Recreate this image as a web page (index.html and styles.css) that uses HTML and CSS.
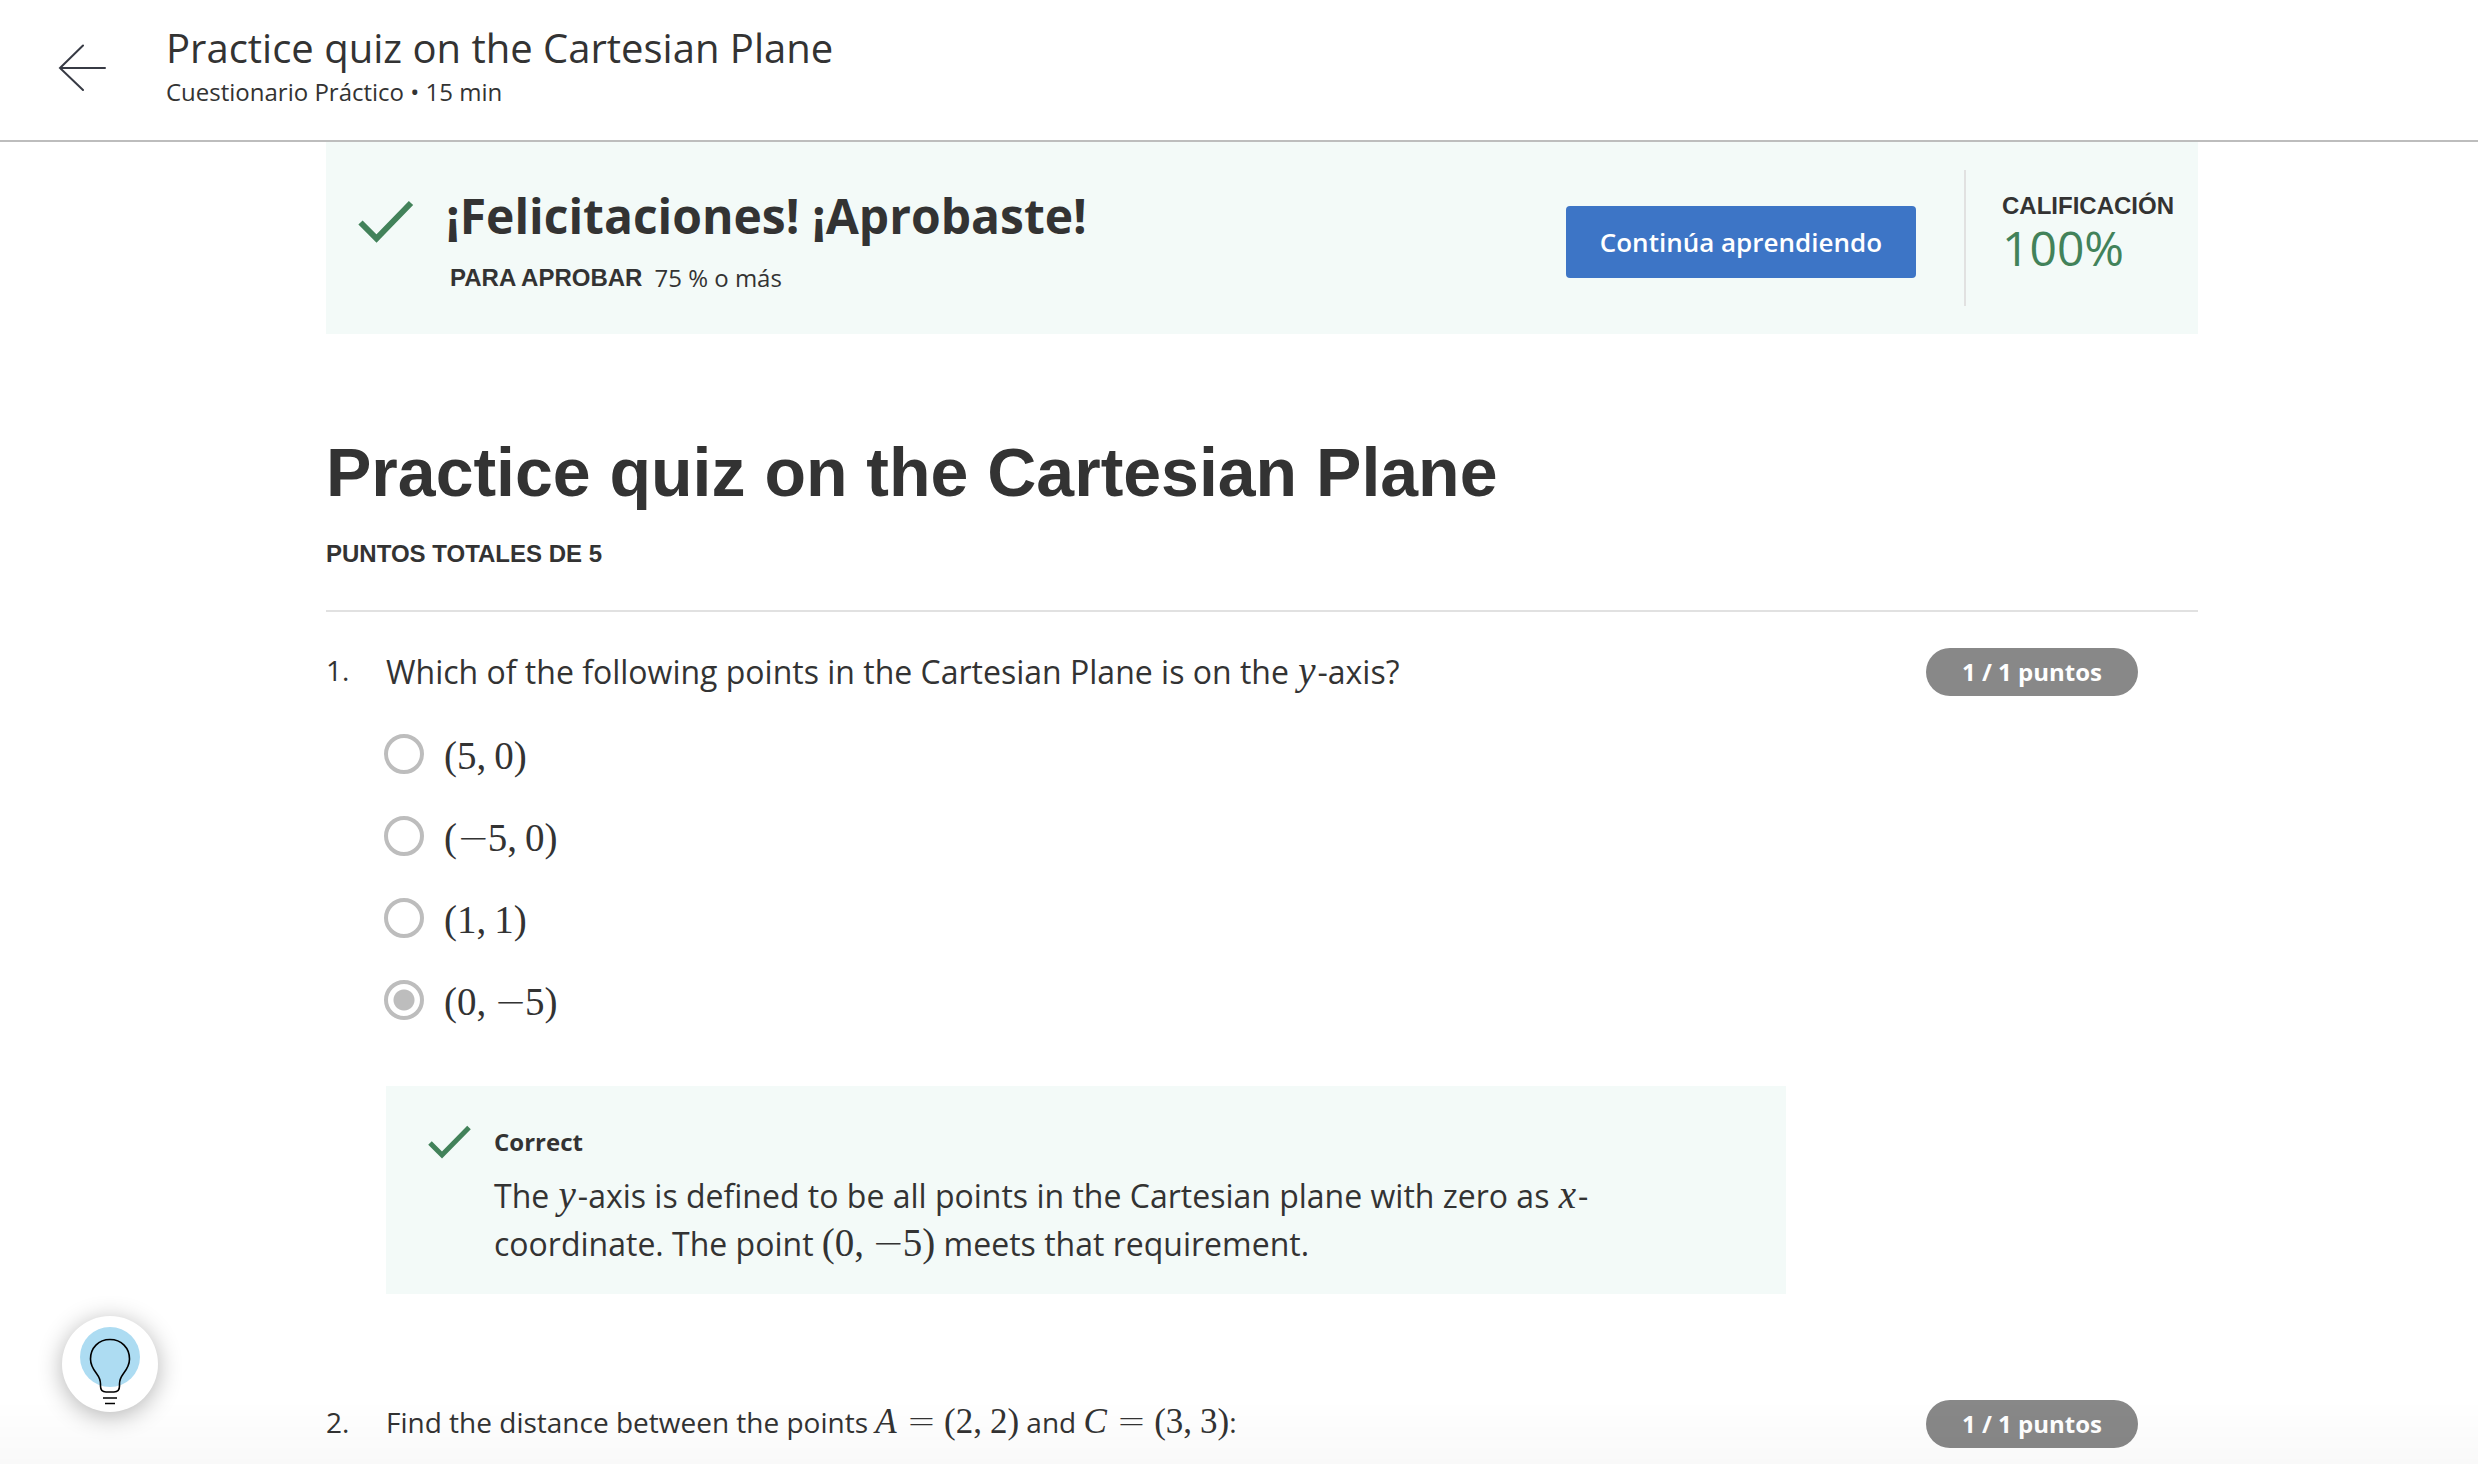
FILE: index.html
```html
<!DOCTYPE html>
<html lang="es">
<head>
<meta charset="utf-8">
<meta name="viewport" content="width=device-width, initial-scale=1">
<title>Practice quiz on the Cartesian Plane</title>
<link rel="stylesheet" href="styles.css">
</head>
<body>
<header class="topbar">
  <a class="back" href="#" aria-label="Volver">
    <svg width="48" height="50" viewBox="0 0 48 50" fill="none" stroke="#373a44" stroke-width="2" stroke-linecap="round"><path d="M2 27H47M25 4.500L2 27L25 49"/></svg>
  </a>
  <div class="topbar-text">
    <div class="topbar-title">Practice quiz on the Cartesian Plane</div>
    <div class="topbar-sub">Cuestionario Práctico • 15 min</div>
  </div>
</header>

<main class="content">
  <section class="banner">
    <svg class="banner-check" width="56" height="48" viewBox="0 0 56 48" fill="none" stroke="#42825a" stroke-width="6"><path d="M2.500 24.500L18.500 40.500L53 5"/></svg>
    <div class="banner-text">
      <h2 class="banner-title">¡Felicitaciones! ¡Aprobaste!</h2>
      <p class="banner-pass"><strong class="caps">PARA APROBAR</strong><span>75 % o más</span></p>
    </div>
    <button class="continue" type="button">Continúa aprendiendo</button>
    <div class="grade">
      <div class="caps">CALIFICACIÓN</div>
      <div class="grade-value">100%</div>
    </div>
  </section>

  <h1 class="title">Practice quiz on the Cartesian Plane</h1>
  <p class="points caps">PUNTOS TOTALES DE 5</p>

  <section class="question">
    <div class="number">1.</div>
    <div class="body">
      <p class="prompt" id="q1">Which of the following points in the Cartesian Plane is on the <i class="math var">y</i>-axis?</p>
      <div class="options" role="radiogroup" aria-labelledby="q1">
        <label class="option"><input type="radio" name="q1"><span class="math">(5<span class="comma">,</span>0)</span></label>
        <label class="option"><input type="radio" name="q1"><span class="math">(<span class="sign">−</span>5<span class="comma">,</span>0)</span></label>
        <label class="option"><input type="radio" name="q1"><span class="math">(1<span class="comma">,</span>1)</span></label>
        <label class="option"><input type="radio" name="q1" checked><span class="math">(0<span class="comma">,</span><span class="sign">−</span>5)</span></label>
      </div>
      <div class="feedback">
        <svg class="feedback-check" width="44" height="36" viewBox="0 0 44 36" fill="none" stroke="#42825a" stroke-width="5"><path d="M2 19L14 31L41 3.500"/></svg>
        <div>
          <h3 class="feedback-title">Correct</h3>
          <p class="feedback-text">The <i class="math var">y</i>-axis is defined to be all points in the Cartesian plane with zero as <i class="math var">x</i>-<br>coordinate. The point <span class="math">(0<span class="comma">,</span><span class="sign">−</span>5)</span> meets that requirement.</p>
        </div>
      </div>
    </div>
    <div class="badge">1 / 1 puntos</div>
  </section>

  <section class="question">
    <div class="number">2.</div>
    <div class="body">
      <p class="prompt prompt-small">Find the distance between the points <span class="math math-small"><i class="cap">A</i><span class="equals">=</span>(2<span class="comma">,</span>2)</span> and <span class="math math-small"><i class="cap">C</i><span class="equals">=</span>(3<span class="comma">,</span>3)</span>:</p>
    </div>
    <div class="badge">1 / 1 puntos</div>
  </section>
</main>

<button class="hint" type="button" aria-label="Ayuda">
  <svg width="96" height="96" viewBox="0 0 96 96" fill="none" stroke="#000" stroke-width="1.600">
    <circle cx="48" cy="41" r="30" fill="#addcf2" stroke="none"/>
    <path d="M48 23.500C36.500 23.500 28.500 32 28.500 43C28.500 49 31 53 34.500 57.500C37.500 61.500 38.500 64 38.500 68V70C38.500 74 40.500 76 44 76H52C55.500 76 57.500 74 57.500 70V68C57.500 64 58.500 61.500 61.500 57.500C65 53 67.500 49 67.500 43C67.500 32 59.500 23.500 48 23.500Z"/>
    <path d="M41 82H55M43 87.500H53"/>
  </svg>
</button>
</body>
</html>
```
FILE: styles.css
```css
* { box-sizing: border-box; }

body {
  margin: 0;
  min-height: 100vh;
  overflow-x: hidden;
  background: #fff;
  color: #333;
  font-family: "Open Sans", sans-serif;
  font-size: 24px;
  line-height: 36px;
}

body::after {
  content: "";
  position: fixed;
  left: 0;
  right: 0;
  bottom: 0;
  height: 64px;
  background: linear-gradient(rgba(0, 0, 0, 0), rgba(0, 0, 0, 0.024));
  pointer-events: none;
}

h1, h2, h3, p { margin: 0; }

.topbar {
  display: flex;
  align-items: center;
  gap: 60px;
  height: 142px;
  padding: 0 58px 8px;
  border-bottom: 2px solid #bdbdbd;
}
.back { display: flex; }
.topbar-title { font-size: 40px; line-height: 52px; }

.content { margin: 0 280px 0 326px; }

.banner {
  display: flex;
  height: 192px;
  padding: 28px 24px 28px 32px;
  background: #f3faf8;
}
.banner-check { margin-top: 28px; }
.banner-text { flex: 1; padding: 14px 0 0 32px; }
.banner-title { font-size: 48px; line-height: 64px; font-weight: 700; }
.banner-pass { display: flex; gap: 12px; margin-top: 12px; padding-left: 4px; }
.caps { font-family: "Liberation Sans", Arial, sans-serif; font-weight: 700; }
.continue {
  height: 72px;
  margin: 36px 48px 0 0;
  padding: 0 34px;
  border: 0;
  border-radius: 4px;
  background: #3d75c6;
  color: #fff;
  font: 600 26px/36px "Open Sans", sans-serif;
}
.grade { border-left: 2px solid #e1e1e1; padding: 18px 0 0 36px; }
.grade-value { color: #42825a; font-size: 48px; line-height: 48px; }

.title {
  margin-top: 96px;
  font: 700 68px/84px "Liberation Sans", Arial, sans-serif;
}
.points { margin-top: 22px; padding-bottom: 38px; border-bottom: 2px solid #e1e1e1; }

.question { display: flex; margin-top: 36px; }
.question + .question { margin-top: 106px; }
.number { width: 60px; font-size: 28px; line-height: 44px; }
.body { flex: 1; min-width: 0; }
.badge {
  height: 48px;
  margin-right: 60px;
  padding: 0 36px;
  border-radius: 24px;
  background: #888;
  color: #fff;
  font-weight: 700;
  line-height: 48px;
}
.prompt { font-size: 32px; line-height: 48px; }
.prompt-small { font-size: 28px; line-height: 44px; }

.options { display: grid; gap: 38px; margin-top: 36px; }
.option {
  display: flex;
  align-items: center;
  gap: 20px;
  height: 44px;
  margin-left: -2px;
}
.option input {
  appearance: none;
  width: 40px;
  height: 40px;
  margin: 0;
  border: 4px solid #bdbdbd;
  border-radius: 50%;
}
.option input:checked { background: radial-gradient(circle, #bdbdbd 10px, transparent 11px); }
.option .math { padding-top: 4px; }

.math { font-family: "Liberation Serif", serif; font-size: 39px; line-height: 40px; white-space: nowrap; }
.math-small { font-size: 35px; }
.var { margin: 0 2px 0 1px; }
.cap { margin-right: 2px; }
.comma { margin-right: 8px; }
.sign, .equals { font-family: "DejaVu Sans", sans-serif; font-weight: 200; }
.sign { margin-right: -2px; }
.equals { margin: 0 8px; }

.feedback {
  display: flex;
  gap: 22px;
  max-width: 1400px;
  margin-top: 64px;
  padding: 38px 42px 26px;
  background: #f3faf8;
}
.feedback-title { font-size: 24px; line-height: 36px; font-weight: 700; }
.feedback-text { margin-top: 12px; font-size: 32px; line-height: 48px; }

.hint {
  position: fixed;
  left: 62px;
  bottom: 52px;
  width: 96px;
  height: 96px;
  padding: 0;
  border: 0;
  border-radius: 50%;
  background: #fff;
  box-shadow: 0 4px 24px rgba(0, 0, 0, 0.3);
}
.hint svg { display: block; }
```
